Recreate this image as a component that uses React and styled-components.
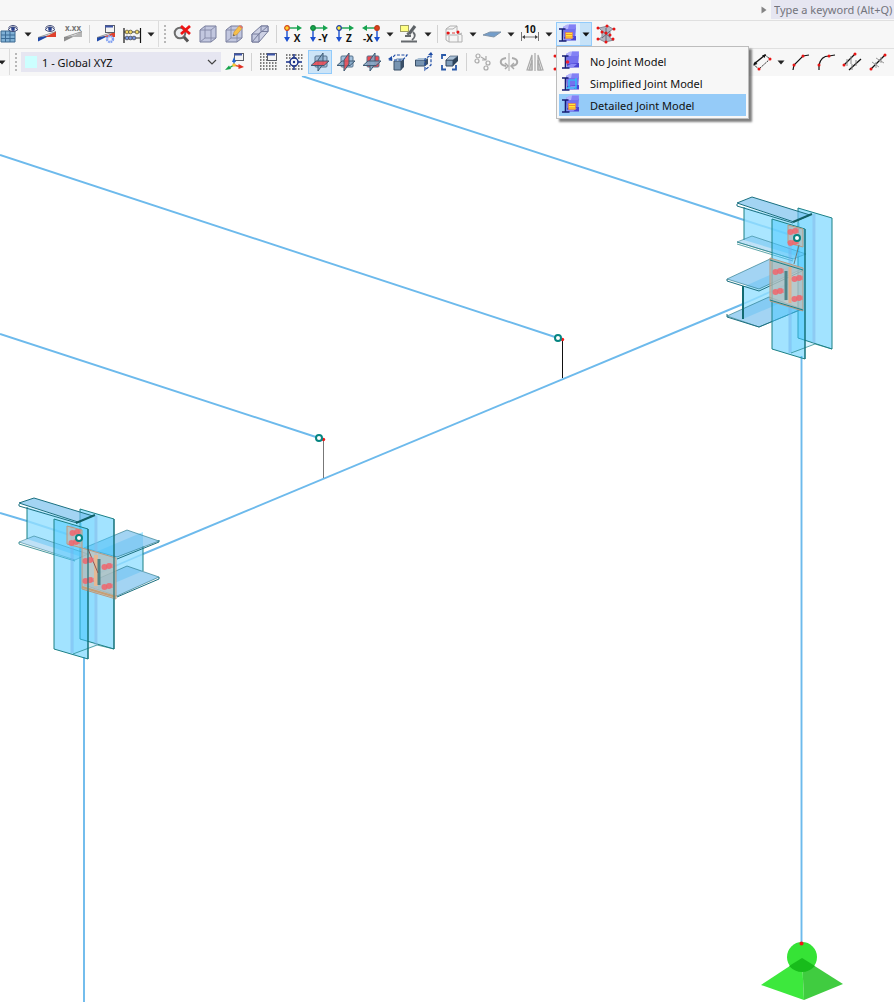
import React, { useState } from "react";
import styled, { createGlobalStyle } from "styled-components";

// ----------------------- icon parts ------------------------------

const Label = styled.text`
  font-family: "Open Sans", sans-serif;
  font-size: ${({ $size }) => $size || 10}px;
  font-weight: 700;
  text-anchor: middle;
  fill: ${({ $tone }) => $tone || "#111"};
`;

const Eye = ({ x, y }) => (
  <g transform={`translate(${x} ${y})`}>
    <path d="M-5 0.5Q0 -4.5 5 0.5Q0 4.5 -5 0.5Z" fill="#f4f6ff" stroke="#3b4674" strokeWidth="1" />
    <path d="M-4.5 -1.5Q0 -5.5 4.5 -1.5" fill="none" stroke="#3b4674" strokeWidth="1" />
    <circle r="1.9" fill="#27408c" />
  </g>
);

const Slope = ({ left = "#1f49a8", right = "#e0402c" }) => (
  <>
    <path d="M1 17.5V13.5L11 11.5V12.5Z" fill={left} />
    <path d="M8 13L19 7.5V13Z" fill={right} />
    <path d="M1 13.5L19 7.5" stroke="#555" strokeWidth="0.6" />
  </>
);

const WindowMark = ({ x, y }) => (
  <g transform={`translate(${x} ${y})`}>
    <rect x="0.5" y="0.5" width="9" height="7" fill="#f3f3f3" stroke="#5c5f68" />
    <path d="M0 1.5H8" stroke="#3d55a8" strokeWidth="2" />
  </g>
);

const Axes = ({ dot, ring, label, flip }) => {
  const x = flip ? 16 : 4;
  return (
    <>
      <path d={flip ? "M14 4H6" : "M6 4H14"} stroke="#17a34f" strokeWidth="1.4" />
      <path d={flip ? "M6 1L1 4L6 7Z" : "M14 1L19 4L14 7Z"} fill="#17a34f" />
      <path d={`M${x} 6V14`} stroke="#1b4fd0" strokeWidth="1.4" />
      <path d={`M${x - 3} 13L${x} 18L${x + 3} 13Z`} fill="#1b4fd0" />
      <circle cx={x} cy="4" r="2.3" fill={dot} stroke={ring} strokeWidth="1.2" />
      <Label x={flip ? 7 : 14} y="18">{label}</Label>
    </>
  );
};

const Cube = () => (
  <>
    <path d="M2 6L7 2H18V14L13 18H2Z" fill="#c2c7df" stroke="#777d9c" strokeLinejoin="round" />
    <path d="M2 6H13V18M13 6L18 2M7 2V14H18M7 14L2 18" fill="none" stroke="#8388a6" strokeWidth="0.9" />
  </>
);

const FrontPlane = ({ fill = "#a3c0dc" }) => (
  <rect x="5" y="4" width="12" height="11" rx="1" fill={fill} stroke="#56728c" />
);

const SidePlane = ({ fill = "#86a9c8" }) => (
  <path d="M8 8L13 1V12L8 19Z" fill={fill} fillOpacity="0.85" stroke="#3f5b74" />
);

const FloorPlane = ({ fill = "#86a9c8" }) => (
  <path d="M1 13.500L6 9H19L14 13.500Z" fill={fill} fillOpacity="0.85" stroke="#3f5b74" />
);

const RED = "#ee4a52";

const Joint = ({ mark }) => (
  <>
    <path d="M5 3L9 1H18V4L17 16H6Z" fill="#7471ee" />
    <path d="M5 3L9 0.5H18L17 5H6Z" fill="#b3b2fb" />
    <path d="M11 0.5H18L17 5H10Z" fill="#8381f5" />
    <path d="M6 13L18 12V16.500H6Z" fill="#4a44d2" />
    <path d="M6 15L10 13H16L12 16.500H6Z" fill="#8b8af6" />
    <path d="M1 5H7.500M1 17H8.500M4.500 5V17" stroke="#141c74" strokeWidth="1.600" />
    {mark === "dot" && <circle cx="6.5" cy="11" r="1.800" fill="#ee2030" />}
    {mark === "simple" && <path d="M8 7H15V15H5M8 7V15M15 5V16" fill="none" stroke="#25cdf7" strokeWidth="1.2" />}
    {mark === "detail" && (
      <>
        <rect x="7.5" y="8.5" width="7" height="6" fill="#ffe936" stroke="#f06b3c" strokeWidth="0.5" />
        <path d="M8.500 10.500H14M8.500 13H14" stroke="#e93328" strokeDasharray="1 1" />
      </>
    )}
  </>
);

const Dots = ({ points }) =>
  points.map(([x, y]) => <circle key={`${x}-${y}`} cx={x} cy={y} r="1.5" fill="#e81414" />);

const GridDots = ({ hole }) => (
  <path
    d={hole ? "M2 3H19M2 6H19M2 14H19M2 17H19" : "M2 2H9M2 5H9M2 8H9M2 11H19M2 14H19M2 17H19"}
    stroke="#555"
    strokeWidth="1.5"
    strokeDasharray="1.5 1.5"
  />
);

// ----------------------- icons ------------------------------

const ICONS = {
  gridEye: (
    <>
      <path d="M2 7H16V18H2Z" fill="#7fb0d5" stroke="#3d688f" />
      <path d="M2 11H16M2 14.5H16M6.5 7V18M11 7V18" stroke="#3a6b96" />
      <Eye x={14} y={5} />
    </>
  ),
  slopeEye: (
    <>
      <Slope />
      <Eye x={13} y={5} />
    </>
  ),
  values: (
    <>
      <Slope left="#8f8f8f" right="#b5b5b5" />
      <Label x="10" y="7" $size={8} $tone="#777">x.xx</Label>
    </>
  ),
  resultSettings: (
    <>
      <Slope />
      <WindowMark x={9} y={1} />
      <circle cx="14" cy="15" r="3" fill="#eef3ff" stroke="#7f9ff0" strokeWidth="2.4" strokeDasharray="1.7 0.7" />
    </>
  ),
  abacus: (
    <>
      <path d="M2 4V19M18.5 4V19" stroke="#151515" strokeWidth="1.2" />
      <path d="M2 8H18M2 14H18" stroke="#333" />
      <g stroke="#333" strokeWidth="0.6">
        <g fill="#f0d867">
          <circle cx="5" cy="8" r="1.9" />
          <circle cx="8.5" cy="8" r="1.9" />
          <circle cx="15" cy="8" r="1.9" />
        </g>
        <g fill="#7895e0">
          <circle cx="5" cy="14" r="1.9" />
          <circle cx="8.5" cy="14" r="1.9" />
          <circle cx="12" cy="14" r="1.9" />
        </g>
      </g>
    </>
  ),
  zoomOff: (
    <>
      <circle cx="8" cy="9" r="5.3" fill="#eceef1" stroke="#6c6c6c" strokeWidth="2" />
      <path d="M12 13L16 17.5" stroke="#555" strokeWidth="3" />
      <path d="M9 2L18 10M18 2L9 10" stroke="#ee1414" strokeWidth="2.8" />
    </>
  ),
  cube: <Cube />,
  cubeEdit: (
    <>
      <Cube />
      <path d="M9 12L10 8L15 2L18 4.5L13 10.5Z" fill="#f7c04b" stroke="#c98f3c" strokeWidth="0.6" />
      <path d="M15 2L16 1L19 3.5L18 4.5Z" fill="#ee775f" />
      <path d="M9 12L9.5 10L11 11.5Z" fill="#555" />
    </>
  ),
  frustum: (
    <g fill="#c2c7df" fillOpacity="0.8" stroke="#777d9c" strokeLinejoin="round">
      <path d="M2 10L11 2H18V7.500L9 18H2Z" />
      <rect x="11" y="2" width="7" height="5.500" />
      <rect x="2" y="10" width="7" height="8" />
      <path d="M9 10L18 2M2 18L11 7.500" fill="none" />
    </g>
  ),
  axisX: <Axes dot="#ffd52d" ring="#d44518" label="X" />,
  axisY: <Axes dot="#12a94c" ring="#16803c" label="-Y" />,
  axisZ: <Axes dot="#ffe83b" ring="#1b3faa" label="Z" />,
  axisMinusX: <Axes dot="#e33d1d" ring="#b83d18" label="-X" flip />,
  microscope: (
    <>
      <path d="M2 17.5H18" stroke="#666a6e" strokeWidth="2" />
      <path d="M6 12H12M10 11L8 9M14 8Q18 12 13 16" fill="none" stroke="#666a6e" strokeWidth="1.800" />
      <path d="M10 10L16 2" stroke="#5d6266" strokeWidth="3.200" />
      <rect x="1.5" y="1.5" width="8" height="6" fill="#ffff84" stroke="#a0a065" />
    </>
  ),
  section: (
    <>
      <path d="M2 5L6 2H13V9L18 11V18H5L2 16Z" fill="#f5f5f5" stroke="#b0b0b0" />
      <path d="M2 5H9L13 2M2 11H14L18 9M5 18V12M14 12V18" fill="none" stroke="#b0b0b0" />
      <path d="M3 9H14" stroke="#e63a3a" strokeDasharray="3 2" />
      <Dots points={[[4, 9], [14, 8]]} />
    </>
  ),
  plane: <path d="M1 11L8 8H19L12 13Z" fill="#739dca" stroke="#8195aa" />,
  dimension: (
    <>
      <path d="M1.5 8V17M18.5 8V17M3 13H17" stroke="#777" />
      <path d="M2 13L5 11V15ZM18 13L15 11V15Z" fill="#444" />
      <Label x="10" y="9">10</Label>
    </>
  ),
  jointNone: <Joint mark="dot" />,
  jointSimple: <Joint mark="simple" />,
  jointDetail: <Joint mark="detail" />,
  solid: (
    <>
      <path d="M3 4L12 2L17 5L14 7V14L18 16L9 18L3 15L6 13V7Z" fill="#b3b5c1" stroke="#888b98" />
      <path d="M6 7L14 13M14 7L6 14M10 4V17" stroke="#666b7a" />
      <Dots points={[[2, 4], [11, 2], [18, 5], [6, 8], [10, 9], [14, 11], [2, 15], [10, 18], [17, 15]]} />
    </>
  ),
  coordWindow: (
    <>
      <WindowMark x={9} y={1} />
      <path d="M9 9V13" stroke="#2163cf" strokeWidth="1.4" />
      <path d="M9 13L4 16" stroke="#16a44b" strokeWidth="1.4" />
      <path d="M9 13L16 15" stroke="#e0562e" strokeWidth="1.4" />
      <path d="M9 5L11 10H7Z" fill="#2163cf" />
      <path d="M0 18L4 13.500L6 17Z" fill="#16a44b" />
      <path d="M19 15L13.500 12V17Z" fill="#e02e20" />
      <circle cx="9" cy="13" r="1.800" fill="#f7c832" />
    </>
  ),
  gridWindow: (
    <>
      <GridDots />
      <WindowMark x={9} y={1} />
    </>
  ),
  gridSnap: (
    <>
      <GridDots hole />
      <path d="M10 2V18M2 10H18" stroke="#172f88" strokeWidth="1.5" />
      <circle cx="10" cy="10" r="4" fill="#f7f7f7" stroke="#172f88" strokeWidth="1.5" />
      <circle cx="10" cy="10" r="1.2" fill="#172f88" />
    </>
  ),
  planeFloor: (
    <>
      <FrontPlane />
      <SidePlane />
      <FloorPlane fill={RED} />
    </>
  ),
  planeSide: (
    <>
      <FrontPlane />
      <FloorPlane />
      <SidePlane fill={RED} />
    </>
  ),
  planeFront: (
    <>
      <FrontPlane fill={RED} />
      <SidePlane />
      <FloorPlane />
    </>
  ),
  boxVertical: (
    <>
      <path d="M6 9H13V18H6Z" fill="#7895b2" stroke="#3b5068" />
      <path d="M13 9L16 6V15L13 18Z" fill="#3a4f68" />
      <path d="M6 9L9 6H16L13 9Z" fill="#a9bfd4" />
      <path d="M2 8L7 3H19L15 8Z" fill="none" stroke="#1c4ba5" strokeWidth="1.200" strokeDasharray="3 1.500" />
      <path d="M0 7L4 4V9Z" fill="#1c4ba5" />
    </>
  ),
  boxFlat: (
    <>
      <path d="M1.500 8H11V14H1.500Z" fill="#7895b2" stroke="#3b5068" />
      <path d="M11 8L14 6V12L11 14Z" fill="#3a4f68" />
      <path d="M1.500 8L4.500 6H14L11 8Z" fill="#a9bfd4" />
      <path d="M11 18V7L17 3V13Z" fill="none" stroke="#1c4ba5" strokeWidth="1.200" strokeDasharray="3 1.500" />
      <path d="M14 3H19L17 0Z" fill="#1c4ba5" />
    </>
  ),
  boxSelect: (
    <>
      <path d="M2 7V3H6M12 17.500H16V13M2 13V17.500H6" fill="none" stroke="#2858a8" strokeWidth="1.800" />
      <path d="M6 8H13V14H6Z" fill="#7f9cb8" stroke="#30455f" />
      <path d="M6 8L10 4H18L13 8Z" fill="#a9bfd4" stroke="#30455f" strokeWidth="0.600" />
      <path d="M13 8L18 4V9L13 14Z" fill="#2d435a" />
    </>
  ),
  copyNodes: (
    <g fill="none" stroke="#aaa" strokeWidth="1.2">
      <circle cx="5" cy="4" r="2" />
      <circle cx="4" cy="9" r="2" />
      <circle cx="15" cy="11" r="2" />
      <circle cx="13" cy="16" r="2" />
      <path d="M8 5L13 8M13 4V8H9" />
    </g>
  ),
  rotate: (
    <g fill="none" stroke="#aaa" strokeWidth="2">
      <path d="M7 6C0 7 0 13 7 14M13 6C20 7 20 13 13 14" />
      <path d="M6 11L9 14L6 17M15 11L12 14L15 17" strokeWidth="1.5" />
      <path d="M10 1V19" strokeWidth="1" />
    </g>
  ),
  mirror: (
    <g fill="none" stroke="#aaa" strokeWidth="1.2">
      <path d="M7 3V18H2ZM13 3V18H18ZM10 1V19" />
      <path d="M7 8V18H4ZM13 8V18H16Z" fill="#ccc" />
    </g>
  ),
  cross: (
    <>
      <path d="M4 4L16 17M16 4L4 17" stroke="#222" />
      <Dots points={[[4, 4], [16, 4], [4, 17], [16, 17]]} />
    </>
  ),
  rectLine: (
    <>
      <path d="M13 3L18 7L7 17L2 13" fill="none" stroke="#222" strokeDasharray="2 1" />
      <path d="M2 12L13 3" stroke="#111" strokeWidth="1.4" />
      <path d="M1 13.500L3 9.500L5.500 12ZM14 2L10 3.500L12.500 6Z" fill="#111" />
      <Dots points={[[18, 7], [7, 17]]} />
    </>
  ),
  polyline: (
    <>
      <path d="M3 18L4 13L13 4L19 3" fill="none" stroke="#111" strokeWidth="1.2" />
      <Dots points={[[4, 13], [13, 4]]} />
    </>
  ),
  arc: (
    <>
      <path d="M3 18V13Q5 4 13 4L19 3" fill="none" stroke="#111" strokeWidth="1.2" />
      <Dots points={[[3, 13], [13, 4]]} />
    </>
  ),
  parallel: (
    <>
      <path d="M2 13L13 2M7 18L19 7" stroke="#111" strokeWidth="1.3" />
      <path d="M5 7V14M9 4V12M10 12V18M14 8V14" stroke="#888" />
      <Dots points={[[2, 13], [13, 2]]} />
    </>
  ),
  divide: (
    <>
      <path d="M3 17L17 3" stroke="#111" strokeWidth="1.3" />
      <path d="M4 10L11 15M8 6L16 11M8 16V10M13 11V5" stroke="#999" />
      <Dots points={[[3, 17], [17, 3]]} />
    </>
  ),
};

const Icon = ({ name }) => (
  <IconSvg viewBox="0 0 20 20" aria-hidden="true">
    {ICONS[name]}
  </IconSvg>
);

// ----------------------- toolbar data ------------------------------

const VIEW_TOOLS = [
  ["gridEye", "Visibility"], "caret",
  ["slopeEye", "Show results"], ["values", "Show values"], "sep",
  ["resultSettings", "Result settings"], ["abacus", "Calculate"], "caret", "grip",
  ["zoomOff", "Reset zoom"], ["cube", "Isometric view"], ["cubeEdit", "Edit view"], ["frustum", "Perspective"], "sep",
  ["axisX", "View in X"], ["axisY", "View in -Y"], ["axisZ", "View in Z"], ["axisMinusX", "View in -X"], "caret",
  ["microscope", "Inspect"], "caret", "sep",
  ["section", "Section"], "caret",
  ["plane", "Clipping plane"], "caret",
  ["dimension", "Dimension"], "caret",
];

const EDIT_TOOLS = [
  ["coordWindow", "Coordinate systems"], "sep",
  ["gridWindow", "Grid settings"], ["gridSnap", "Snap"], ["planeFloor", "Plane XY", true], ["planeSide", "Plane YZ"],
  ["planeFront", "Plane XZ"], ["boxVertical", "Extrude"], ["boxFlat", "Move face"], ["boxSelect", "Select box"], "sep",
  ["copyNodes", "Copy"], ["rotate", "Rotate"], ["mirror", "Mirror"], ["cross", "Connect"],
  ["cross", "Intersect"], ["arc", "Fillet"], ["divide", "Split"], "sep",
  ["parallel", "Offset"], ["polyline", "Extend"], ["arc", "Trim"], "caret",
  ["rectLine", "Rectangle"], "caret",
  ["polyline", "Polyline"], ["arc", "Arc"], ["parallel", "Parallel"], ["divide", "Divide line"],
];

const JOINT_MODELS = [
  ["jointNone", "No Joint Model"],
  ["jointSimple", "Simplified Joint Model"],
  ["jointDetail", "Detailed Joint Model"],
];

const CaretIcon = () => (
  <CaretSvg viewBox="0 0 8 5" aria-hidden="true">
    <path d="M0.5 0.5H7.5L4 4.5Z" fill="currentColor" />
  </CaretSvg>
);

const renderTools = (tools) =>
  tools.map((tool, i) => {
    if (tool === "sep") return <Separator key={i} />;
    if (tool === "grip") return <Grip key={i} />;
    if (tool === "caret") {
      return (
        <Caret key={i} type="button" aria-label="More options">
          <CaretIcon />
        </Caret>
      );
    }
    const [name, label, active] = tool;
    return (
      <Tool key={i} type="button" aria-label={label} $active={active}>
        <Icon name={name} />
      </Tool>
    );
  });

// ----------------------- model view ------------------------------

const SHEET = { fill: "#45c8ff", fillOpacity: 0.5, stroke: "#1b8085", strokeWidth: 1, strokeLinejoin: "round" };
const FLANGE = { fill: "#72bdec", fillOpacity: 0.65, stroke: "#1b7080", strokeWidth: 1, strokeLinejoin: "round" };
const WEB = { fill: "#45c8ff", fillOpacity: 0.46 };
const PLATE = { fill: "#d3bba8", fillOpacity: 0.6, stroke: "#b99a80", strokeWidth: 1 };

const Bolt = ({ x, y }) => (
  <g transform={`translate(${x} ${y})`} fill="#f0656c" fillOpacity="0.85">
    <ellipse cx="-2.5" cy="1" rx="3" ry="2.900" />
    <ellipse cx="2" cy="0" rx="2.900" ry="2.900" />
    <path d="M3 -3L6 -2V2L3 2Z" fillOpacity="0.5" />
  </g>
);

const Hinge = ({ x, y }) => (
  <circle cx={x} cy={y} r="3" fill="#fff" stroke="#078582" strokeWidth="2" />
);

const RightJoint = () => (
  <g>
    <polygon points="815,214 791,224 791,353 815,344" {...WEB} fillOpacity="0.2" />
    <polygon points="798,208 832,218 832,349 798,338" {...SHEET} />
    <path d="M814 214V343" stroke="#8ab7e8" strokeOpacity="0.5" strokeWidth="3" />
    <polygon points="744,207 744,240 800,257 800,223" {...WEB} />
    <path d="M744 207V240" stroke="#1b8085" />
    <polygon points="737,242 752,236 806,254 793,259" {...FLANGE} fillOpacity="0.45" strokeOpacity="0.5" />
    <path d="M737 242L793 259M737 244L793 261" stroke="#1b8085" strokeOpacity="0.7" />
    <polygon points="737,203 752,197 810,215 794,222" {...FLANGE} />
    <path d="M737 204V206L793 223" fill="none" stroke="#1b7080" />
    <polygon points="743,287 790,266 790,299 743,319" {...WEB} />
    <polygon points="727,316 769,297 802,309 759,327" {...FLANGE} strokeOpacity="0.6" />
    <path d="M727 314V317L759 327L802 309" fill="none" stroke="#1b7080" />
    <polygon points="727,279 770,259 802,269 759,289" {...FLANGE} strokeOpacity="0.6" />
    <path d="M727 279V281L759 291L802 271V269" fill="none" stroke="#1b7080" />
    <path d="M743 286V319" stroke="#126b72" strokeWidth="2" />
    <polygon points="772,219 805,229 805,359 772,349" {...SHEET} />
    <path d="M790 225V353" stroke="#6cb2ee" strokeOpacity="0.5" strokeWidth="3" />
    <path d="M791 353L815 344L832 349" fill="none" stroke="#1b8085" strokeOpacity="0.7" />
    <path d="M793 222L812 214" stroke="#115f66" strokeWidth="2" />
    <polygon points="788,225 803,229 803,247 788,243" {...PLATE} />
    <polygon points="770,258 803,268 803,311 770,301" {...PLATE} />
    <path d="M770 260L803 270M770 300L803 310" stroke="#1b8085" />
    <path d="M786 271V300" stroke="#4e8588" strokeWidth="3" />
    <path d="M790 267V303" stroke="#e0b08c" strokeWidth="3" />
    <path d="M799 245L794 264" stroke="#697c7c" />
    <Bolt x={778} y={271} />
    <Bolt x={778} y={291} />
    <Bolt x={797} y={278} />
    <Bolt x={797} y={298} />
    <Bolt x={793} y={231} />
    <Bolt x={793} y={242} />
    <path d="M805 229V359" stroke="#126b72" />
    <Hinge x={797} y={238} />
  </g>
);

const LeftJoint = () => (
  <g>
    <polygon points="97,515 73,525 73,654 97,646" {...WEB} fillOpacity="0.2" />
    <polygon points="98,551 143,532 143,571 98,590" {...WEB} />
    <path d="M143 546V571" stroke="#1b8085" />
    <polygon points="84,585 127,566 159,577 117,596" {...FLANGE} strokeOpacity="0.6" />
    <polygon points="84,548 127,530 159,541 117,557" {...FLANGE} strokeOpacity="0.6" />
    <path d="M117 559L159 542V540M117 597L159 579V577" fill="none" stroke="#1b7080" />
    <polygon points="80,509 114,519 114,649 80,639" {...SHEET} />
    <path d="M96 516V645" stroke="#8ab7e8" strokeOpacity="0.5" strokeWidth="3" />
    <polygon points="27,507 27,539 82,557 82,523" {...WEB} />
    <path d="M27 507V539" stroke="#1b8085" />
    <polygon points="19,542 34,536 88,554 75,560" {...FLANGE} fillOpacity="0.45" strokeOpacity="0.5" />
    <path d="M19 542V544L75 561" fill="none" stroke="#1b8085" strokeOpacity="0.8" />
    <polygon points="19,503 34,498 93,516 78,522" {...FLANGE} />
    <path d="M19 504V506L77 523" fill="none" stroke="#1b7080" />
    <polygon points="54,519 88,529 88,659 54,649" {...SHEET} />
    <path d="M72 525V653" stroke="#6cb2ee" strokeOpacity="0.5" strokeWidth="3" />
    <path d="M73 654L97 645L114 649" fill="none" stroke="#1b8085" strokeOpacity="0.7" />
    <path d="M76 523L95 515" stroke="#115f66" strokeWidth="2" />
    <polygon points="67,526 82,530 82,548 67,544" {...PLATE} />
    <polygon points="82,548 116,558 116,599 82,589" {...PLATE} />
    <path d="M82 587L116 597" stroke="#c69f76" strokeWidth="2" />
    <path d="M96 555V586" stroke="#e6b894" strokeWidth="4" />
    <path d="M99 559V585" stroke="#4e8588" strokeWidth="3" />
    <path d="M88 549L98 573" stroke="#8a5a56" />
    <Bolt x={88} y={560} />
    <Bolt x={88} y={580} />
    <Bolt x={107} y={566} />
    <Bolt x={107} y={586} />
    <Bolt x={75} y={532} />
    <Bolt x={74} y={542} />
    <path d="M88 529V659M114 519V649" stroke="#126b72" />
    <Hinge x={79} y={538} />
  </g>
);

const ModelView = () => (
  <Viewport role="img" aria-label="Steel frame model" viewBox="0 76 894 926">
    <g stroke="#6dbaec" strokeWidth="1.900" fill="none">
      <path d="M302 76L744 220" />
      <path d="M0 155L558 338" />
      <path d="M0 334L319 438" />
      <path d="M0 513L27 521" />
      <path d="M143 554L743 304" />
      <path d="M801.5 356V943" />
      <path d="M84 657V1002" />
      <path d="M744 220L797 237M27 521L79 538M99 573L143 554M743 304L788 284" strokeOpacity="0.4" />
    </g>
    <path d="M562.5 340V378" stroke="#111" />
    <path d="M323.5 440V478" stroke="#777" />
    <circle cx="562.500" cy="339.500" r="1.7" fill="#f01818" />
    <circle cx="323.500" cy="439.500" r="1.7" fill="#f01818" />
    <Hinge x={558} y={338} />
    <Hinge x={319} y={438} />
    <RightJoint />
    <LeftJoint />
    <circle cx="802" cy="957" r="15" fill="#36e336" />
    <path d="M761 985L802 958L804 1000Z" fill="#3de83d" />
    <path d="M802 958L843 984L804 1000Z" fill="#40cc40" />
    <path d="M802 958L789 966Q795 972 802 972Q809 972 815 966Z" fill="#18bc1b" />
    <circle cx="801.5" cy="943.5" r="2" fill="#f01818" />
  </Viewport>
);

// ----------------------- app ------------------------------

const App = () => {
  const [model, setModel] = useState("jointDetail");
  const [isOpen, setIsOpen] = useState(true);

  return (
    <Page>
      <GlobalStyle />
      <SearchBar>
        <SearchArrow viewBox="0 0 6 8" aria-hidden="true">
          <path d="M0.5 0.5L5.5 4L0.5 7.5Z" fill="#858585" />
        </SearchArrow>
        <SearchInput type="text" aria-label="Search" placeholder="Type a keyword (Alt+Q)" />
      </SearchBar>

      <Toolbar>
        {renderTools(VIEW_TOOLS)}
        <SplitButton>
          <SplitMain type="button" aria-label="Joint model">
            <Icon name={model} />
          </SplitMain>
          <SplitCaret type="button" aria-label="Choose joint model" onClick={() => setIsOpen(!isOpen)}>
            <CaretIcon />
          </SplitCaret>
          {isOpen ? (
            <Menu role="menu">
              {JOINT_MODELS.map(([icon, label]) => (
                <MenuItem key={icon} type="button" role="menuitem" $active={icon === model} onClick={() => setModel(icon)}>
                  <Icon name={icon} />
                  {label}
                </MenuItem>
              ))}
            </Menu>
          ) : null}
        </SplitButton>
        <Tool type="button" aria-label="Solid model">
          <Icon name="solid" />
        </Tool>
      </Toolbar>

      <Toolbar>
        <Caret type="button" aria-label="More options">
          <CaretIcon />
        </Caret>
        <Grip />
        <SelectBox>
          <Swatch />
          <CoordSelect aria-label="Coordinate system">
            <option>1 - Global XYZ</option>
          </CoordSelect>
          <Chevron viewBox="0 0 10 6" aria-hidden="true">
            <path d="M1 1L5 5L9 1" fill="none" stroke="#444" strokeWidth="1.2" />
          </Chevron>
        </SelectBox>
        {renderTools(EDIT_TOOLS)}
      </Toolbar>

      <ModelView />
    </Page>
  );
};

export default App;

const GlobalStyle = createGlobalStyle`
  * {
    box-sizing: border-box;
  }
  body {
    margin: 0;
    background-color: #fff;
    font-family: "Noto Sans", "Open Sans", sans-serif;
    font-size: 11px;
    color: #111;
  }
  button, input, select {
    font: inherit;
    color: inherit;
    border: none;
    padding: 0;
    margin: 0;
  }
`;

const Page = styled.main`
  display: flex;
  flex-direction: column;
  overflow: hidden;
`;

const SearchBar = styled.div`
  display: flex;
  justify-content: flex-end;
  align-items: center;
  gap: 4px;
  height: 20px;
  padding-bottom: 1px;
  background-color: #f7f7f7;
`;

const SearchArrow = styled.svg`
  width: 6px;
  height: 8px;
`;

const SearchInput = styled.input`
  width: 123px;
  height: 19px;
  padding-left: 3px;
  background-color: #e6e6f1;
  outline: none;
  &::placeholder {
    color: #73747c;
    opacity: 1;
  }
`;

const Toolbar = styled.div`
  display: flex;
  align-items: center;
  gap: 2px;
  height: 28px;
  margin-left: -3px;
  padding-bottom: 1px;
  background-color: #f7f7f7;
  border-top: 1px solid #e0e0e0;
  white-space: nowrap;
`;

const Tool = styled.button`
  display: flex;
  align-items: center;
  justify-content: center;
  flex-shrink: 0;
  width: 24px;
  height: 24px;
  background-color: ${({ $active }) => ($active ? "#cce4f7" : "transparent")};
  outline: ${({ $active }) => ($active ? "1px solid #92cbfb" : "none")};
  outline-offset: -1px;
`;

const IconSvg = styled.svg`
  display: block;
  flex-shrink: 0;
  width: 20px;
  height: 20px;
  overflow: visible;
`;

const Caret = styled.button`
  display: flex;
  align-items: center;
  justify-content: center;
  flex-shrink: 0;
  width: 10px;
  height: 24px;
  background-color: transparent;
  color: #222;
`;

const CaretSvg = styled.svg`
  display: block;
  flex-shrink: 0;
  width: 8px;
  height: 5px;
`;

const Separator = styled.span`
  flex-shrink: 0;
  width: 5px;
  height: 18px;
  background: linear-gradient(#d2d2d2, #d2d2d2) center / 1px 100% no-repeat;
`;

const Grip = styled.span`
  flex-shrink: 0;
  display: flex;
  justify-content: flex-end;
  width: 10px;
  height: 26px;
  padding: 4px 2px 4px 0;
  border-left: 1px solid #dcdcdc;
  &::after {
    content: "";
    width: 2px;
    background: repeating-linear-gradient(#b8b8b8 0 2px, transparent 2px 4px);
  }
`;

const SelectBox = styled.div`
  display: flex;
  align-items: center;
  gap: 5px;
  flex-shrink: 0;
  width: 200px;
  height: 20px;
  padding: 0 4px;
  background-color: #e6e6f1;
`;

const Swatch = styled.span`
  width: 12px;
  height: 12px;
  background-color: #ccffff;
`;

const CoordSelect = styled.select`
  flex: 1;
  height: 20px;
  appearance: none;
  background-color: transparent;
  outline: none;
`;

const Chevron = styled.svg`
  width: 10px;
  height: 6px;
`;

const SplitButton = styled.div`
  position: relative;
  display: flex;
  flex-shrink: 0;
  width: 36px;
  height: 24px;
  outline: 1px solid #92cbfb;
  outline-offset: -1px;
`;

const SplitMain = styled.button`
  display: flex;
  align-items: center;
  justify-content: center;
  width: 24px;
  background-color: #e0effc;
`;

const SplitCaret = styled.button`
  display: flex;
  align-items: center;
  justify-content: center;
  width: 12px;
  background-color: #c6e2f8;
`;

const Menu = styled.div`
  position: absolute;
  top: 100%;
  left: 0;
  z-index: 2;
  width: 193px;
  padding: 3px 2px 2px;
  background-color: #f7f7f7;
  border: 1px solid #bdbdbd;
  box-shadow: 3px 3px 2px rgba(0, 0, 0, 0.5);
`;

const MenuItem = styled.button`
  display: flex;
  align-items: center;
  gap: 9px;
  width: 100%;
  height: 22px;
  padding-left: 2px;
  text-align: left;
  background-color: ${({ $active }) => ($active ? "#95cbf8" : "transparent")};
`;

const Viewport = styled.svg`
  display: block;
  width: 100%;
  height: auto;
`;
